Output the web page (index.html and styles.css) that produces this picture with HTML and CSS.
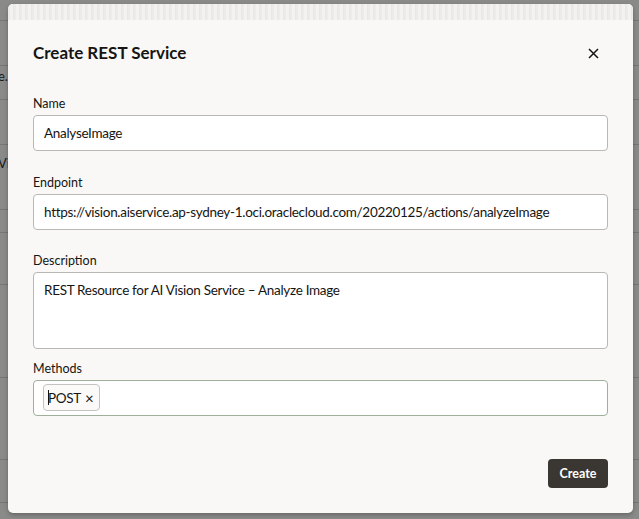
FILE: index.html
```html
<!DOCTYPE html>
<html>
<head>
<meta charset="utf-8">
<link rel="stylesheet" href="styles.css">
</head>
<body>
<div class="page">
  <div class="bg-row r1"></div>
  <div class="bg-row r2"></div>
  <div class="bg-row r3"><span class="frag">e.aiservice</span></div>
  <div class="bg-row r4"></div>
  <div class="bg-row r5"><span class="frag">Vision</span></div>
  <div class="bg-row r6"></div>
  <div class="bg-row r7"></div>
  <div class="bg-row r8"></div>
  <div class="bg-row r9"></div>
  <div class="bg-row r10"></div>
</div>
<div class="dialog">
  <div class="dialog-strip"></div>
  <div class="dialog-head">
    <h1 class="title">Create REST Service</h1>
    <button class="close" aria-label="Close">
      <svg width="11" height="11" viewBox="0 0 11 11"><path d="M1 1L10 10M10 1L1 10" stroke="#161513" stroke-width="1.5" fill="none"/></svg>
    </button>
  </div>
  <div class="form">
    <div class="field">
      <label class="label">Name</label>
      <div class="input">AnalyseImage</div>
    </div>
    <div class="field">
      <label class="label">Endpoint</label>
      <div class="input">https://vision.aiservice.ap-sydney-1.oci.oraclecloud.com/20220125/actions/analyzeImage</div>
    </div>
    <div class="field">
      <label class="label">Description</label>
      <div class="input textarea">REST Resource for AI Vision Service – Analyze Image</div>
    </div>
    <div class="field methods">
      <label class="label">Methods</label>
      <div class="input chips"><span class="chip"><span class="caret"></span>POST <span class="chip-x">×</span></span></div>
    </div>
  </div>
  <div class="footer">
    <button class="btn">Create</button>
  </div>
</div>
</body>
</html>
```
FILE: styles.css
```css
* { box-sizing: border-box; }
html, body { margin: 0; padding: 0; }
body {
  width: 639px;
  height: 519px;
  overflow: hidden;
  background: #8a8a89;
  font-family: Lato, "Noto Sans", sans-serif;
  position: relative;
}
.page {
  display: flex;
  flex-direction: column;
}
.bg-row {
  border-bottom: 1px solid #767675;
  font-size: 13px;
  color: #1a1a1a;
  display: flex;
  align-items: flex-start;
}
.r1 { height: 21px; }
.r2 { height: 45px; }
.r3 { height: 34px; }
.r4 { height: 45px; }
.r5 { height: 65px; }
.r6 { height: 23px; }
.r7 { height: 52px; }
.r8 { height: 93px; }
.r9 { height: 82px; }
.r10 { height: 43px; }
.frag { margin: 2px 0 0 -2px; }
.r5 .frag { margin: 10px 0 0 -2px; }

.dialog {
  position: absolute;
  left: 8px;
  top: 4px;
  width: 625px;
  height: 509px;
  background: #f9f8f6;
  border-radius: 5px;
  box-shadow: 0 2px 4px rgba(0,0,0,0.25);
  display: flex;
  flex-direction: column;
  overflow: hidden;
}
.dialog-strip {
  height: 16px;
  background: repeating-linear-gradient(90deg, #ecebea 0 2px, #f3f2f0 2px 5px, #e8e7e5 5px 6px);
  flex: none;
}
.dialog-head {
  display: flex;
  align-items: center;
  justify-content: space-between;
  padding: 21px 32px 0 25px;
}
.title {
  margin: 0;
  font-size: 17px;
  font-weight: 700;
  color: #161513;
  line-height: 24px;
}
.close {
  border: 0;
  background: transparent;
  padding: 0;
  width: 16px;
  height: 16px;
  display: flex;
  align-items: center;
  justify-content: center;
}
.form {
  padding: 30px 25px 0 25px;
  display: flex;
  flex-direction: column;
  gap: 22.5px;
}
.field {
  display: flex;
  flex-direction: column;
  gap: 2px;
}
.field.methods { margin-top: -12px; }
.label {
  font-size: 12.5px;
  color: #161513;
  line-height: 18px;
  height: 18px;
}
.input {
  background: #fff;
  border: 1px solid #b9b7b4;
  border-radius: 4px;
  height: 36px;
  padding: 0 10px;
  font-size: 13.5px;
  letter-spacing: -0.3px;
  color: #161513;
  display: flex;
  align-items: center;
  white-space: nowrap;
  overflow: hidden;
}
.textarea {
  height: 77px;
  align-items: flex-start;
  padding-top: 9px;
}
.chips {
  height: 36px;
  border-color: #9eb09a;
  padding-left: 9px;
}
.chip {
  display: inline-flex;
  align-items: center;
  height: 27px;
  padding: 0 6px 0 4px;
  border: 1px solid #c5c3c0;
  border-radius: 4px;
  background: #fbfaf9;
  font-size: 13.5px;
}
.caret {
  width: 1px;
  height: 15px;
  background: #161513;
  margin-right: -1px;
}
.chip-x {
  margin-left: 4px;
  font-size: 15px;
}
.footer {
  margin-top: auto;
  display: flex;
  justify-content: flex-end;
  padding: 0 25px 25px 0;
}
.btn {
  background: #3a3631;
  color: #fff;
  border: 0;
  border-radius: 4px;
  height: 29px;
  width: 60px;
  font-family: inherit;
  font-size: 12.5px;
  font-weight: 700;
}
```
